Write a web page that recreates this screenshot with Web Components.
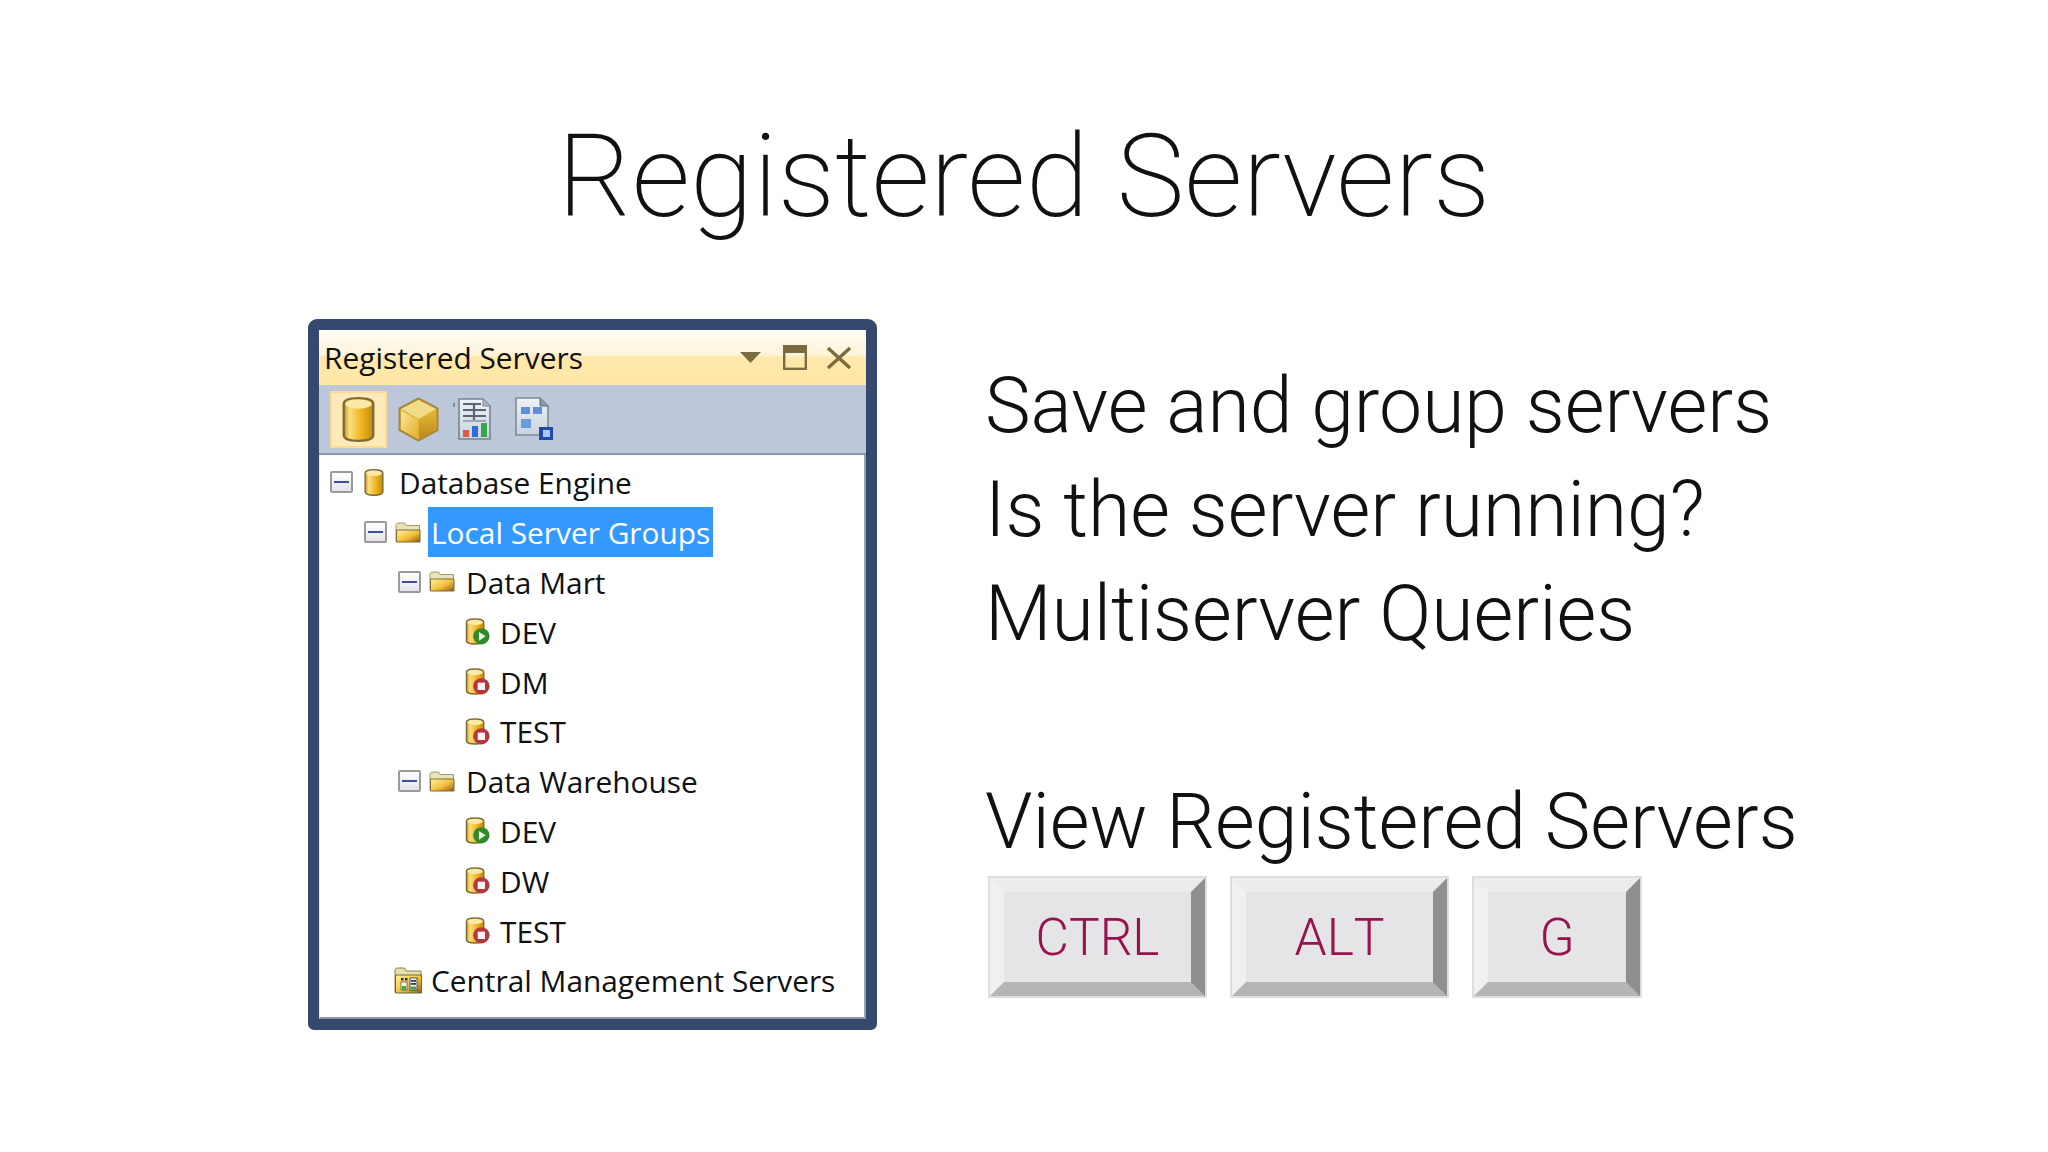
<!DOCTYPE html>
<html><head><meta charset="utf-8"><style>html,body{margin:0;padding:0;background:#fff}</style></head>
<body>
<slide-page>
  <h-title slot="title">Registered Servers</h-title>
  <reg-panel slot="left">
    <tree-row depth="0" icon="db" exp>Database Engine</tree-row>
    <tree-row depth="1" icon="folder" exp selected>Local Server Groups</tree-row>
    <tree-row depth="2" icon="folder" exp>Data Mart</tree-row>
    <tree-row depth="3" icon="run">DEV</tree-row>
    <tree-row depth="3" icon="stop">DM</tree-row>
    <tree-row depth="3" icon="stop">TEST</tree-row>
    <tree-row depth="2" icon="folder" exp>Data Warehouse</tree-row>
    <tree-row depth="3" icon="run">DEV</tree-row>
    <tree-row depth="3" icon="stop">DW</tree-row>
    <tree-row depth="3" icon="stop">TEST</tree-row>
    <tree-row depth="1" icon="cms">Central Management Servers</tree-row>
  </reg-panel>
  <talk-points slot="right">
    <div>Save and group servers</div>
    <div>Is the server running?</div>
    <div>Multiserver Queries</div>
    <div>&nbsp;</div>
    <div>View Registered Servers</div>
    <key-row>
      <key-cap w="219">CTRL</key-cap>
      <key-cap w="219">ALT</key-cap>
      <key-cap w="170">G</key-cap>
    </key-row>
  </talk-points>
</slide-page>
<script>
const defs=`<defs>
  <linearGradient id="cy" x1="0" x2="1" y1="0" y2="0"><stop offset="0" stop-color="#c4921a"/><stop offset=".2" stop-color="#fbdf80"/><stop offset=".6" stop-color="#f0b420"/><stop offset="1" stop-color="#bf8a12"/></linearGradient>
  <linearGradient id="fo" x1="0" x2="1" y1="0" y2="1"><stop offset="0" stop-color="#fff2a0"/><stop offset=".55" stop-color="#f5bf3a"/><stop offset="1" stop-color="#8a5f10"/></linearGradient>
  <linearGradient id="cl" x1="0" x2="1" y1="0" y2="1"><stop offset="0" stop-color="#fbe89a"/><stop offset="1" stop-color="#e2ae2a"/></linearGradient>
  <linearGradient id="cr" x1="0" x2="0" y1="0" y2="1"><stop offset="0" stop-color="#e8b838"/><stop offset="1" stop-color="#b98a1a"/></linearGradient>
  <linearGradient id="dc" x1="0" x2="0" y1="0" y2="1"><stop offset="0" stop-color="#eef2f7"/><stop offset="1" stop-color="#c8d2e0"/></linearGradient>
  </defs>`;
const cyl = `<path d="M1 4.5C1 2 5 1 10 1s9 1 9 3.5v19c0 2.5-4 3.5-9 3.5s-9-1-9-3.5z" fill="url(#cy)" stroke="#7d6a34" stroke-width="1.4"/><ellipse cx="10" cy="4.6" rx="8" ry="2.8" fill="#fbe9a8"/>`;
const svg = (w,h,vb,body)=>`<svg width="${w}" height="${h}" viewBox="${vb}">${defs}${body}</svg>`;
const treeIcons = {
 db: svg(22,27,"0.3 0.3 19.4 27.4",cyl),
 run: svg(25,27,"0 0 25 28",cyl+`<circle cx="16.5" cy="19" r="8.5" fill="#2f8a2c"/><path d="M14 14.5l7 4.5-7 4.5z" fill="#e8f6e0"/>`),
 stop: svg(25,27,"0 0 25 28",cyl+`<circle cx="16.5" cy="19" r="8.5" fill="#b5363e"/><rect x="12.7" y="15.2" width="7.6" height="7.6" fill="#fbf0f0"/>`),
 folder: svg(26,21,"0 0 26 21",`<path d="M1 19.5V2.5L2.5 1h7L11 3.5h13.5V19.5z" fill="#e9e2b8" stroke="#a89a68"/><path d="M1.5 20V8h23.5v12z" fill="url(#fo)" stroke="#6f5f30" stroke-width=".9"/>`),
 cms: svg(28,27,"0 0 28 27",`<path d="M1 25.5V3L2.5 1h8L12 4h15v21.5z" fill="#e8dfae" stroke="#8a8050"/><path d="M1.5 26V8h26v18z" fill="url(#fo)" stroke="#6d6840"/><rect x="7" y="11" width="2.5" height="2.5" fill="#26324a"/><rect x="11" y="11" width="2.5" height="2.5" fill="#26324a"/><rect x="7" y="15" width="6" height="8" fill="#f5f7f0" stroke="#26324a" stroke-width=".6"/><rect x="8" y="19" width="4" height="4" fill="#46a844"/><rect x="16" y="11" width="7" height="12" fill="#f5f7f0" stroke="#26324a" stroke-width=".8"/><rect x="17" y="13" width="5" height="1.8" fill="#2c3d66"/><rect x="17" y="16" width="5" height="1.8" fill="#2c3d66"/><rect x="17" y="19.5" width="5" height="3" fill="#46a844"/>`)
};
function def(name, html, cls){
  const t=document.createElement('template'); t.innerHTML=html;
  customElements.define(name, class extends HTMLElement{
    constructor(){super();this.attachShadow({mode:'open'}).appendChild(t.content.cloneNode(true));}
    connectedCallback(){cls&&cls.call(this);}
  });
}
def('slide-page',`<style>
:host{display:block;width:2048px;height:1152px;overflow:hidden;background:#fff;color:#111;font-family:Roboto,sans-serif}
.t{display:block;height:319px}
.m{display:flex;padding-left:308px;gap:108px;align-items:flex-start}
</style><div class="t"><slot name="title"></slot></div><div class="m"><slot name="left"></slot><slot name="right"></slot></div>`);
def('h-title',`<style>:host{display:block;text-align:center;font:170 114.6px/1 Roboto,sans-serif;padding-top:120px;color:#111}</style><slot></slot>`);
def('reg-panel',`<style>
:host{display:block;width:569px;height:711px;box-sizing:border-box;border:11px solid #35496f;border-radius:9px 9px 6px 6px;background:#fff;font-family:"Open Sans",sans-serif}
.bar{height:55px;display:flex;align-items:center;justify-content:space-between;padding:0 14px 0 5px;border-radius:5px 5px 0 0;
 background:linear-gradient(180deg,#fffdf6 0,#fff3da 45%,#ffe8ac 50%,#ffe7a6 100%);font-size:29.85px;color:#111;box-sizing:border-box}
.btns{display:flex;align-items:center;gap:19px}
.tools{height:70px;box-sizing:border-box;background:#bcc8d9;border-bottom:2px solid #8a97a5;display:flex;align-items:center;padding:0 11px;gap:11px}
.on{width:57px;height:57px;box-sizing:border-box;background:#fdeab8;border:2px solid #fbdc96;display:flex;align-items:center;justify-content:center}
.btn{display:flex;align-items:center}
.btn svg,.on svg{filter:blur(.5px)}
.tree{display:grid;grid-auto-rows:49.8px;padding-top:2.5px;border-left:1px solid #e6ebf3;border-right:2px solid #98a2b0;border-bottom:2px solid #8f99a6;height:564px;box-sizing:border-box;background:#fff}
</style>
<div class="bar"><span>Registered Servers</span><span class="btns">
<svg width="21" height="11" viewBox="0 0 21 11" style="margin-right:3px"><path d="M0 0h21L10.5 11z" fill="#7b6b3e"/></svg>
<svg width="24" height="25" viewBox="0 0 24 25"><rect x="1.2" y="1.2" width="21.6" height="22.6" fill="none" stroke="#7b6b3e" stroke-width="2.4"/><rect x="1" y="1" width="22" height="7" fill="#7b6b3e"/></svg>
<svg width="26" height="22" viewBox="0 0 26 22"><path d="M2 1l22 20M24 1L2 21" stroke="#7b6b3e" stroke-width="3.4" fill="none"/></svg>
</span></div>
<div class="tools">
<span class="on"><svg width="33" height="45" viewBox="0.3 0.3 19.4 27.4">${defs}${cyl}</svg></span>
<span class="btn"><svg width="41" height="45" viewBox="0 0 41 45">${defs}<path d="M20.5 1.5L39.5 11.5v21.5L20.5 43.5 1.5 33V11.5z" fill="#e2b030" stroke="#a58a3e" stroke-width="2" stroke-linejoin="round"/><path d="M20.5 3L38 12 20.5 22 3 12z" fill="#f2dc88"/><path d="M3 13.5L20 23v19L3 32.5z" fill="url(#cl)"/><path d="M21 23L38 13.5v19L21 42z" fill="url(#cr)"/></svg></span>
<span class="btn" style="margin-left:3px"><svg width="39" height="42" viewBox="0 0 39 42">${defs}<path d="M6 1h24l7 7v33H6z" fill="url(#dc)" stroke="#78838f" stroke-width="1.6"/><path d="M30 1v7h7" fill="#aeb8c4" stroke="#78838f"/><path d="M10 6h18M10 12h23M10 18h23M21 6v16" stroke="#5d6670" stroke-width="2.2"/><path d="M10 23h23" stroke="#8a939d" stroke-width="1.5"/><rect x="10" y="32" width="6" height="7" fill="#e2553f"/><rect x="19" y="28" width="6" height="11" fill="#2f6fd0"/><rect x="28" y="25" width="6" height="14" fill="#37a84a"/><rect x="0" y="5" width="2" height="4" fill="#7f8a96"/></svg></span>
<span class="btn" style="margin-left:12px"><svg width="39" height="44" viewBox="0 0 39 44">${defs}<path d="M1 1h24l8 8v29H1z" fill="url(#dc)" stroke="#7f8a96" stroke-width="1.6"/><path d="M25 1v8h8" fill="#8c97a5" stroke="#5f6a78"/><rect x="6" y="10" width="9" height="7" fill="#5b8fd9"/><rect x="18" y="10" width="9" height="7" fill="#5b8fd9"/><rect x="6" y="22" width="10" height="9" fill="#6c9ade"/><rect x="24" y="30" width="14" height="13" fill="#1f4aa8"/><rect x="28" y="33" width="7" height="7" fill="#a8c8ef"/></svg></span>
</div>
<div class="tree"><slot></slot></div>`);
def('tree-row',`<style>
:host{display:flex;align-items:center;font:29.85px/1 "Open Sans",sans-serif;color:#111;white-space:nowrap}
.exp{width:23px;height:22px;box-sizing:border-box;border:2px solid #9a9a9a;border-radius:2px;background:linear-gradient(#fff,#e2e4e8);display:flex;align-items:center;justify-content:center;flex:none}
.exp i{display:block;width:15px;height:2px;background:#3f4f9e}
.ic{display:flex;flex:none}
.ic svg{filter:blur(.4px)}
.tx{padding:2px 3px 0;box-sizing:border-box;height:50px;display:flex;align-items:center}
:host([selected]) .tx{background:#3399ff;color:#fff}
</style><span class="exp"><i></i></span><span class="ic"></span><span class="tx"><slot></slot></span>`,function(){
  const d=+this.getAttribute('depth'), s=this.shadowRoot, icon=this.getAttribute('icon');
  const base=[10,44,78,112][d];
  const ic=s.querySelector('.ic'), ex=s.querySelector('.exp'), tx=s.querySelector('.tx');
  ic.innerHTML=treeIcons[icon];
  if(this.hasAttribute('exp')){ ex.style.marginLeft=base+'px'; ic.style.marginLeft=(icon==='db'?10:8)+'px'; tx.style.marginLeft=(icon==='db'?11:7)+'px'; }
  else { ex.remove(); ic.style.marginLeft=(d===3?145:74)+'px'; tx.style.marginLeft=(d===3?7:6)+'px'; }
  if(d===2){tx.style.marginLeft=this.hasAttribute('exp')?'8px':'7px'}
});
def('talk-points',`<style>:host{display:block;font:300 76.9px/104px Roboto,sans-serif;color:#111;padding-top:35px;white-space:nowrap}</style><slot></slot>`);
def('key-row',`<style>:host{display:flex;gap:23px;margin:2px 0 0 3px;line-height:1}</style><slot></slot>`);
def('key-cap',`<style>
:host{display:flex;box-sizing:border-box;height:122px;border:2px solid #dedede;background:#dedede}
.f{flex:1;box-sizing:border-box;border-style:solid;border-width:14px;border-color:#ececec #8f8f8f #b6b4b6 #f0f0f0;background:#e5e4e6;display:flex;align-items:center;justify-content:center;color:#99114f;font:300 51.5px/1 Roboto,sans-serif;font-kerning:none;padding-top:2px}
</style><div class="f"><slot></slot></div>`,function(){this.style.width=this.getAttribute('w')+'px'});
</script>
</body></html>
